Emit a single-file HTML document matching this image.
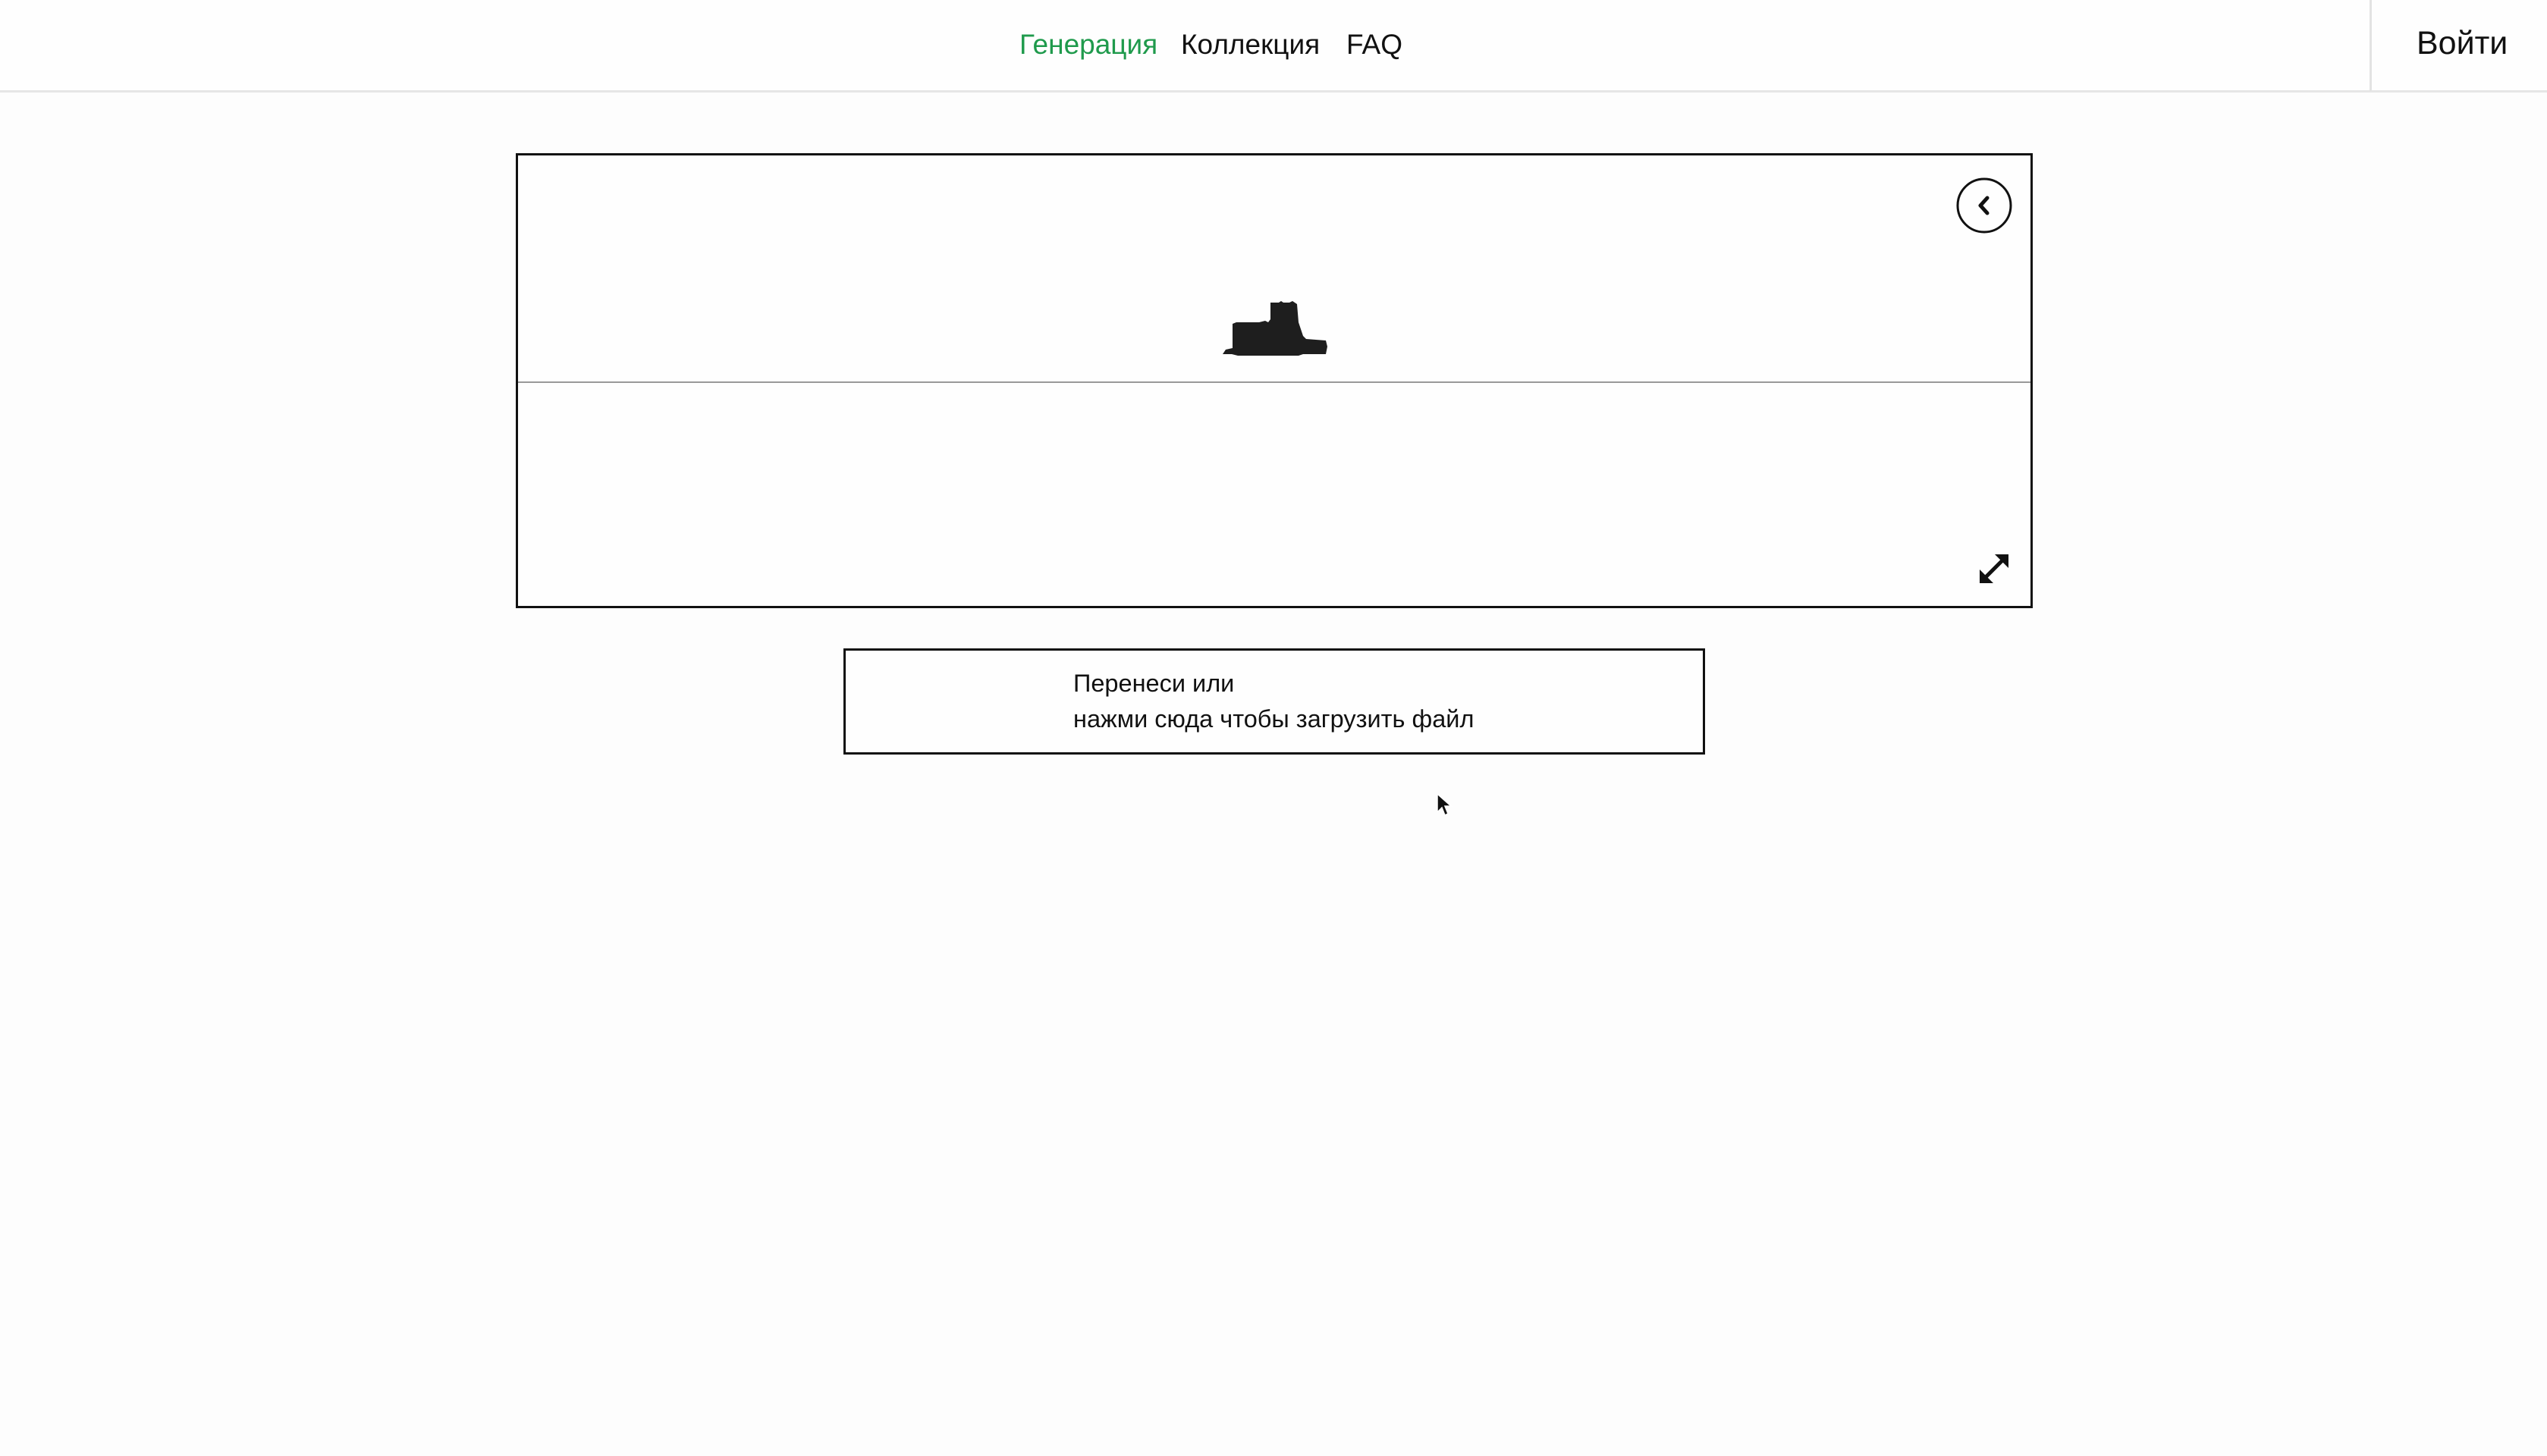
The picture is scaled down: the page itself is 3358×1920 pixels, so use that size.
<!DOCTYPE html>
<html><head><meta charset="utf-8"><style>
*{margin:0;padding:0;box-sizing:border-box}
html,body{width:3358px;height:1920px;background:#fdfdfd;overflow:hidden;font-family:"Liberation Sans","Noto Sans CJK SC",sans-serif;color:#111}
.hdr{position:absolute;left:0;top:0;width:3358px;height:122px;background:#fefefe;border-bottom:3px solid #e6e6e6}
.nav{position:absolute;top:36px;font-size:37px;line-height:46px}
.div{position:absolute;left:3124px;top:0;width:3px;height:120px;background:#e3e3e3}
.box{position:absolute;left:680px;top:202px;width:2000px;height:600px;border:3px solid #111;background:#fefefe}
.line{position:absolute;left:0;top:298px;width:100%;height:2px;background:#999}
.up{position:absolute;left:1112px;top:855px;width:1136px;height:140px;border:3px solid #111;background:#fefefe}
.up p{position:absolute;left:300px;font-size:32.5px;line-height:47px}
</style></head><body>
<div class="hdr">
<span class="nav" style="left:1344px;color:#1f9a4c">Генерация</span>
<span class="nav" style="left:1557px">Коллекция</span>
<span class="nav" style="left:1775px">FAQ</span>
<div class="div"></div>
<span class="nav" style="left:3186px;font-size:43px;top:34px">Войти</span>
</div>
<div class="box">
<div class="line"></div>
<svg style="position:absolute;left:1895px;top:28px" width="76" height="76" viewBox="0 0 76 76"><circle cx="38" cy="38" r="35" fill="none" stroke="#111" stroke-width="3"/><path d="M42 28 L33 38 L42 48" fill="none" stroke="#111" stroke-width="5" stroke-linecap="round" stroke-linejoin="round"/></svg>
<svg style="position:absolute;left:1925px;top:524px" width="42" height="42" viewBox="0 0 42 42"><path d="M6 36 L36 6" stroke="#111" stroke-width="5"/><path d="M22 2 L40 2 L40 20 Z" fill="#111"/><path d="M2 22 L2 40 L20 40 Z" fill="#111"/></svg>
<svg style="position:absolute;left:929px;top:192px" width="140" height="74" viewBox="0 0 140 74"><path d="M63 2 L74 2 L77 0 L80 2 L88 2 L92 0 L98 4 L100 28 L106 46 L110 50 L136 52 L138 60 L136 70 L106 70 L100 72 L20 72 L12 70 L0 70 L4 64 L13 62 L13 30 L18 28 L48 28 L56 26 L60 28 L63 24 Z" fill="#1e1e1e"/></svg>
</div>
<div class="up"><p style="top:20px">Перенеси или</p><p style="top:67px">нажми сюда чтобы загрузить файл</p></div>
<svg style="position:absolute;left:1893px;top:1045px" width="22" height="34" viewBox="0 0 22 34"><path d="M2 2 L2 26 L8 20 L12 30 L16 28 L12 18 L20 18 Z" fill="#111" stroke="#fff" stroke-width="1.5"/></svg>
</body></html>
